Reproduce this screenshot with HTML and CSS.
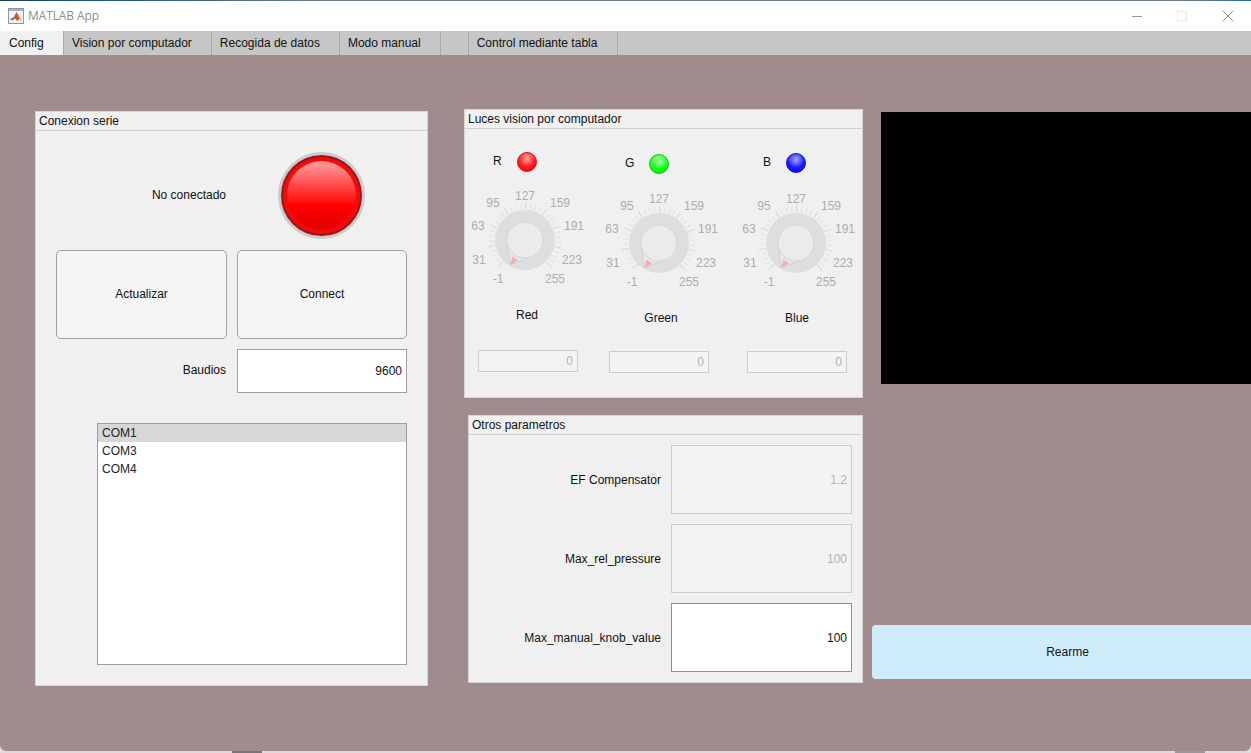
FILE: index.html
```html
<!DOCTYPE html>
<html lang="en">
<head>
    <meta charset="UTF-8">
    <meta name="viewport" content="width=device-width, initial-scale=1.0">
    <title>MATLAB App</title>
    <link rel="stylesheet" href="styles.css">
</head>
<body>
    <svg class="defs" width="0" height="0">
        <defs>
            <symbol id="dial" viewBox="0 0 120 100">
                <g transform="translate(60 50)">
                    <path class="tick-minor" pathLength="322.5" d="M-23.69 23.69A33.5 33.5 0 1 1 22.79 24.56"/>
                    <path class="tick-major" pathLength="322.5" d="M-24.04 24.04A34 34 0 1 1 23.13 24.92"/>
                    <circle class="dial-outer" r="30"/>
                    <path class="dial-wedge" d="M-17.6 4L-15 25L5 17.3Z"/>
                    <circle class="dial-inner" r="18"/>
                    <path class="dial-tip" d="M-15 25L-12.5 16.5L-7 20.5Z"/>
                </g>
            </symbol>
        </defs>
    </svg>

    <div class="desk-line"></div>

    <header class="titlebar">
        <svg class="app-icon" width="16" height="16" viewBox="0 0 16 16">
            <rect x="0.5" y="0.5" width="15" height="15" fill="#f4f4f4" stroke="#8d97a3"/>
            <rect x="1" y="1" width="14" height="2" fill="#9db2c8"/>
            <path d="M2 11.5L5.5 9.5L8.5 4L11 8.5L14 13L11.5 11L9 13L7 10.5Z" fill="#d9531e"/>
            <path d="M2 11.5L5.5 9.5L7 10.5L5 12.5Z" fill="#4f86b5"/>
            <path d="M8.5 4L11 8.5L14 13L11.5 11Z" fill="#f0a030"/>
        </svg>
        <span class="app-title">MATLAB App</span>
        <div class="win-controls">
            <svg class="win-min" width="10" height="10" viewBox="0 0 10 10"><path d="M0 5.5H10"/></svg>
            <svg class="win-max" width="10" height="10" viewBox="0 0 10 10"><rect x="0.5" y="0.5" width="9" height="9"/></svg>
            <svg class="win-close" width="10" height="10" viewBox="0 0 10 10"><path d="M0 0L10 10M10 0L0 10"/></svg>
        </div>
    </header>

    <nav class="tabs">
        <div class="tab tab-active">Config</div>
        <div class="tab">Vision por computador</div>
        <div class="tab">Recogida de datos</div>
        <div class="tab">Modo manual</div>
        <div class="tab"></div>
        <div class="tab tab-wide">Control mediante tabla</div>
    </nav>

    <main class="main">
        <section class="panel panel-serial">
            <h2 class="panel-title">Conexion serie</h2>
            <div class="serial-grid">
                <div class="form-label">No conectado</div>
                <div class="lamp-big"></div>
                <button class="btn">Actualizar</button>
                <button class="btn">Connect</button>
                <div class="form-label">Baudios</div>
                <div class="field field-baud">9600</div>
            </div>
            <ul class="listbox">
                <li class="list-selected">COM1</li>
                <li>COM3</li>
                <li>COM4</li>
            </ul>
        </section>

        <div class="col-mid">
            <section class="panel panel-lights">
                <h2 class="panel-title">Luces vision por computador</h2>
                <div class="channels">
                    <div class="channel channel-red">
                        <div class="lamp-row"><span class="lamp-name">R</span><span class="lamp lamp-r"></span></div>
                        <svg class="knob" width="120" height="100" viewBox="0 0 120 100">
                            <use href="#dial"/>
                            <text x="33" y="93">-1</text><text x="14" y="74">31</text><text x="13" y="40">63</text>
                            <text x="28" y="17">95</text><text x="60" y="10">127</text><text x="95" y="17">159</text>
                            <text x="109" y="40">191</text><text x="107" y="74">223</text><text x="90" y="93">255</text>
                        </svg>
                        <div class="knob-label">Red</div>
                        <div class="field field-small field-off">0</div>
                    </div>
                    <div class="channel channel-green">
                        <div class="lamp-row"><span class="lamp-name">G</span><span class="lamp lamp-g"></span></div>
                        <svg class="knob" width="120" height="100" viewBox="0 0 120 100">
                            <use href="#dial"/>
                            <text x="33" y="93">-1</text><text x="14" y="74">31</text><text x="13" y="40">63</text>
                            <text x="28" y="17">95</text><text x="60" y="10">127</text><text x="95" y="17">159</text>
                            <text x="109" y="40">191</text><text x="107" y="74">223</text><text x="90" y="93">255</text>
                        </svg>
                        <div class="knob-label">Green</div>
                        <div class="field field-small field-off">0</div>
                    </div>
                    <div class="channel channel-blue">
                        <div class="lamp-row"><span class="lamp-name">B</span><span class="lamp lamp-b"></span></div>
                        <svg class="knob" width="120" height="100" viewBox="0 0 120 100">
                            <use href="#dial"/>
                            <text x="33" y="93">-1</text><text x="14" y="74">31</text><text x="13" y="40">63</text>
                            <text x="28" y="17">95</text><text x="60" y="10">127</text><text x="95" y="17">159</text>
                            <text x="109" y="40">191</text><text x="107" y="74">223</text><text x="90" y="93">255</text>
                        </svg>
                        <div class="knob-label">Blue</div>
                        <div class="field field-small field-off">0</div>
                    </div>
                </div>
            </section>

            <section class="panel panel-params">
                <h2 class="panel-title">Otros parametros</h2>
                <div class="params-grid">
                    <div class="form-label">EF Compensator</div>
                    <div class="field field-off">1.2</div>
                    <div class="form-label">Max_rel_pressure</div>
                    <div class="field field-off">100</div>
                    <div class="form-label">Max_manual_knob_value</div>
                    <div class="field">100</div>
                </div>
            </section>
        </div>

        <div class="col-right">
            <div class="video"></div>
            <button class="btn-rearme">Rearme</button>
        </div>
    </main>

    <div class="desk-bottom"></div>
</body>
</html>
```

FILE: styles.css
```css
* {
    box-sizing: border-box;
}
html, body {
    margin: 0;
    height: 753px;
    overflow: hidden;
}
body {
    display: flex;
    flex-direction: column;
    font-family: "Liberation Sans", Arial, sans-serif;
    font-size: 12px;
    color: #111;
    background-color: #e4e4e4;
}
.defs {
    position: absolute;
}
.desk-line {
    height: 1px;
    background: linear-gradient(to right, #17405e 0, #1f5a86 100px, #6b7a84 320px, #6b7a84 1190px, #2a6ea0 1251px);
}

/* title bar */
.titlebar {
    display: flex;
    align-items: center;
    height: 30px;
    padding: 0 0 1px 8px;
    background-color: #fff;
}
.app-title {
    margin-left: 4px;
    font-family: "Open Sans", Arial, sans-serif;
    font-size: 12px;
    letter-spacing: -0.1px;
    color: #8f8f8f;
}
.win-controls {
    display: flex;
    align-items: center;
    gap: 35px;
    margin-left: auto;
    padding-right: 18px;
}
.win-controls svg {
    fill: none;
    stroke-width: 1;
}
.win-min {
    stroke: #9a9a9a;
}
.win-max {
    stroke: #e6e6e6;
}
.win-close {
    margin-left: 1px;
    stroke: #8a8a8a;
}

/* tabs */
.tabs {
    display: flex;
    height: 24px;
    background-color: #c6c6c6;
}
.tab {
    padding: 5px 19px 0 8px;
    line-height: 14px;
    border-right: 1px solid #a9a9a9;
}
.tab-active {
    width: 64px;
    padding-left: 9px;
    background-color: #f0f0f0;
}
.tab-wide {
    padding-right: 20px;
}

/* main area */
.main {
    display: flex;
    flex: 1;
    align-items: flex-start;
    background-color: #a08c8c;
    border-radius: 0 0 6px 6px;
}
.panel {
    background-color: #f0f0f0;
    border: 1px solid #d8d4d4;
}
.panel-title {
    height: 19px;
    margin: 0;
    padding-left: 3px;
    font-size: 12px;
    font-weight: normal;
    line-height: 18px;
    border-bottom: 1px solid #cfcfcf;
}
.form-label {
    align-self: center;
    text-align: right;
}

/* serial panel */
.panel-serial {
    flex: none;
    width: 393px;
    height: 575px;
    margin: 56px 0 0 35px;
}
.serial-grid {
    display: grid;
    grid-template-columns: 171px 170px;
    grid-template-rows: 88px 89px 44px;
    column-gap: 10px;
    row-gap: 10px;
    margin: 21px 0 0 20px;
}
.serial-grid .form-label {
    padding: 0 1px 2px 0;
}
.lamp-big {
    justify-self: center;
    width: 87px;
    height: 87px;
    margin-left: -1px;
    border-radius: 50%;
    border: 3px solid #cfc9c9;
    background: linear-gradient(to bottom, #ffb0b0 0, #ff7070 25%, #ff2a2a 48%, #ff0000 62%, #d80000 100%);
    box-shadow: inset 0 0 0 2px #8e1a22, inset 0 0 0 6px #f40a0a;
}
.btn {
    padding: 0 0 2px;
    font-family: inherit;
    font-size: 12px;
    color: #111;
    background-color: #f5f5f5;
    border: 1px solid #a0a0a0;
    border-radius: 5px;
}
.field {
    display: flex;
    align-items: center;
    justify-content: flex-end;
    padding-right: 4px;
    background-color: #fff;
    border: 1px solid #8f8f8f;
}
.field-off {
    color: #b2b2b2;
    background-color: #f3f3f3;
    border-color: #cdcdcd;
}
.field-baud {
    border-color: #a0a0a0;
}
.listbox {
    width: 310px;
    height: 242px;
    margin: 30px 0 0 61px;
    padding: 0;
    list-style: none;
    background-color: #fff;
    border: 1px solid #9c9c9c;
}
.listbox li {
    height: 18px;
    padding-left: 4px;
    line-height: 18px;
    color: #222;
}
.listbox .list-selected {
    background-color: #d7d7d7;
}

/* middle column */
.col-mid {
    flex: none;
    margin: 54px 0 0 36px;
}
.panel-lights {
    width: 399px;
    height: 289px;
}
.channels {
    display: flex;
    padding-left: 13px;
}
.channel {
    display: flex;
    flex-direction: column;
    width: 100px;
}
.channel-red {
    padding-top: 23px;
}
.channel-green {
    margin-left: 31px;
    padding-top: 25px;
}
.channel-blue {
    margin-left: 38px;
    padding-top: 24px;
}
.lamp-row {
    display: flex;
    align-items: center;
    padding-left: 15px;
}
.channel-green .lamp-row {
    padding-left: 16px;
}
.lamp-name {
    width: 24px;
    margin-top: -2px;
}
.channel-blue .lamp-name {
    width: 23px;
    margin-left: 1px;
}
.lamp {
    width: 20px;
    height: 20px;
    border-radius: 50%;
}
.lamp-r {
    background: radial-gradient(circle at 50% 30%, #ffa8a8 0, #ff1a1a 55%, #e80000 100%);
    border: 1px solid #d81010;
}
.lamp-g {
    background: radial-gradient(circle at 50% 30%, #a8ffa8 0, #1aff1a 55%, #00d800 100%);
    border: 1px solid #10c410;
}
.lamp-b {
    background: radial-gradient(circle at 50% 30%, #a8a8ff 0, #1a1aff 55%, #0000d8 100%);
    border: 1px solid #1010c4;
}
.knob {
    margin-top: 19px;
    margin-left: -10px;
    overflow: visible;
}
.knob text {
    font-size: 12px;
    fill: #adadad;
    text-anchor: middle;
}
.channel-red .knob {
    margin-top: 18px;
    margin-left: -13px;
}
.channel-blue .knob {
    margin-top: 20px;
    margin-left: -11px;
}
.knob-label {
    margin-top: 18px;
    line-height: 14px;
    text-align: center;
}
.channel-red .knob-label {
    padding-right: 2px;
}
.channel-green .knob-label {
    padding-left: 4px;
}
.field-small {
    height: 22px;
    margin-top: 26px;
}
.channel-red .field-small {
    margin-top: 28px;
}
.tick-minor {
    fill: none;
    stroke: #e4e4e4;
    stroke-width: 5;
    stroke-dasharray: 2.5 7.5;
}
.tick-major {
    fill: none;
    stroke: #dedede;
    stroke-width: 8;
    stroke-dasharray: 2.5 37.5;
}
.dial-outer {
    fill: #dedede;
}
.dial-inner {
    fill: #ebebeb;
    stroke: #d6d6d6;
}
.dial-wedge {
    fill: #e7e7e7;
    stroke: #cdcdcd;
    stroke-width: 0.8;
}
.dial-tip {
    fill: #f2b0b0;
}

/* other params */
.panel-params {
    width: 395px;
    height: 268px;
    margin: 17px 0 0 4px;
}
.params-grid {
    display: grid;
    grid-template-columns: 183px 181px;
    grid-auto-rows: 69px;
    column-gap: 10px;
    row-gap: 10px;
    padding: 10px 0 0 9px;
}

/* right column */
.col-right {
    flex: 1;
    min-width: 0;
    margin: 57px 0 0 9px;
}
.video {
    height: 272px;
    margin-left: 9px;
    background-color: #000;
}
.btn-rearme {
    display: block;
    width: 391px;
    height: 54px;
    margin-top: 241px;
    padding: 0;
    font-family: inherit;
    font-size: 12px;
    color: #111;
    background-color: #cfecfb;
    border: none;
    border-radius: 4px;
}
.desk-bottom {
    height: 2px;
    background: linear-gradient(to right, #dcdcdc 232px, #777 232px, #777 262px, #dcdcdc 262px, #dcdcdc 1175px, #999 1175px, #999 1205px, #dcdcdc 1205px);
}
```
